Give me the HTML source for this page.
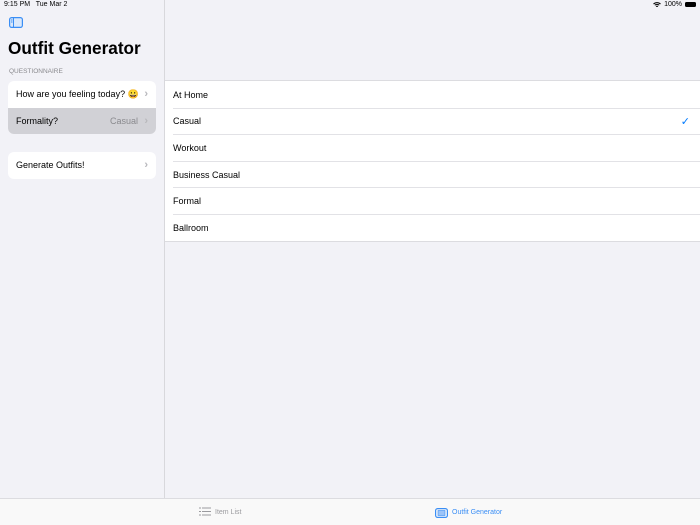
<!DOCTYPE html><html><head><style>
*{margin:0;padding:0;box-sizing:border-box}
body{width:700px;height:525px;background:#f2f2f7;font-family:"Liberation Sans",sans-serif;position:relative;overflow:hidden;color:#000}
.abs{position:absolute}
.side{left:0;top:0;width:165px;height:498px;border-right:1px solid #d8d8dc}
.card{left:8px;width:148px;background:#fff;border-radius:6px;overflow:hidden}
.row{height:26.5px;display:flex;align-items:center;padding:0 8px;font-size:9px;position:relative}
.chev{position:absolute;right:8px;color:#b8b8bc;font-size:11px;font-weight:bold}
.list{left:165px;top:80px;width:535px;background:#fff;border-top:1px solid #dcdce0;border-bottom:1px solid #dcdce0}
.lrow{height:26.6px;display:flex;align-items:center;padding-left:8px;padding-top:1px;font-size:9px;position:relative}
.lrow+.lrow:before{content:"";position:absolute;left:8px;right:0;top:0;border-top:1px solid #e2e2e6}
.tab{left:0;top:498px;width:700px;height:27px;background:#f9f9f9;border-top:1px solid #dcdce0}
</style></head><body>
<div class="abs" style="left:4px;top:1px;font-size:7px">9:15 PM&nbsp;&nbsp; Tue Mar 2</div>
<div class="abs" style="right:4px;top:1px;font-size:7px;display:flex;align-items:center;gap:3px">
<svg width="8" height="6" viewBox="0 0 8 6"><path d="M0.5 2A5 5 0 0 1 7.5 2M1.8 3.3A3.2 3.2 0 0 1 6.2 3.3M3.1 4.6A1.3 1.3 0 0 1 4.9 4.6" stroke="#000" fill="none" stroke-width="1"/></svg>100%
<span style="display:inline-block;width:11px;height:5px;background:#000;border-radius:1.5px"></span></div>
<div class="abs side"></div>
<svg class="abs" style="left:9px;top:17px" width="14" height="11" viewBox="0 0 14 11"><rect x="0.6" y="0.6" width="12.8" height="9.8" rx="2" fill="#dbe9fb" stroke="#3a8ef5" stroke-width="1.2"/><line x1="4.5" y1="1" x2="4.5" y2="10" stroke="#3a8ef5"/><line x1="2" y1="3" x2="3.5" y2="3" stroke="#3a8ef5"/><line x1="2" y1="5" x2="3.5" y2="5" stroke="#3a8ef5"/></svg>
<div class="abs" style="left:8px;top:38px;font-size:17.2px;font-weight:bold">Outfit Generator</div>
<div class="abs" style="left:9px;top:68px;font-size:6.5px;color:#8a8a8e">QUESTIONNAIRE</div>
<div class="abs card" style="top:81px">
<div class="row">How are you feeling today? <span style="position:absolute;right:17px;font-size:9px">😀</span><span class="chev">›</span></div>
<div class="row" style="background:#d1d1d6">Formality?<span style="position:absolute;right:18px;color:#8a8a8e">Casual</span><span class="chev">›</span></div>
</div>
<div class="abs card" style="top:152px"><div class="row">Generate Outfits!<span class="chev">›</span></div></div>
<div class="abs list">
<div class="lrow">At Home</div>
<div class="lrow">Casual<span style="position:absolute;right:10px;color:#007aff;font-size:11px">✓</span></div>
<div class="lrow">Workout</div>
<div class="lrow">Business Casual</div>
<div class="lrow">Formal</div>
<div class="lrow">Ballroom</div>
</div>
<div class="abs tab"></div>
<svg class="abs" style="left:199px;top:507px" width="12" height="9" viewBox="0 0 12 9"><g stroke="#9a9a9e" stroke-width="1"><line x1="0" y1="1" x2="2" y2="1"/><line x1="3" y1="1" x2="12" y2="1"/><line x1="0" y1="4.5" x2="2" y2="4.5"/><line x1="3" y1="4.5" x2="12" y2="4.5"/><line x1="0" y1="8" x2="2" y2="8"/><line x1="3" y1="8" x2="12" y2="8"/></g></svg>
<div class="abs" style="left:215px;top:509px;font-size:7px;color:#9a9a9e">Item List</div>
<svg class="abs" style="left:435px;top:507px" width="13" height="12" viewBox="0 0 13 12"><rect x="0.6" y="1.6" width="11.8" height="8.8" rx="2" fill="none" stroke="#3a8ef5" stroke-width="1.2"/><rect x="3" y="3.5" width="7" height="5" fill="#9cc4f8" stroke="#3a8ef5" stroke-width=".6"/><line x1="3" y1="10.5" x2="10" y2="10.5" stroke="#3a8ef5"/></svg>
<div class="abs" style="left:452px;top:509px;font-size:7px;color:#3a8ef5">Outfit Generator</div>
</body></html>
